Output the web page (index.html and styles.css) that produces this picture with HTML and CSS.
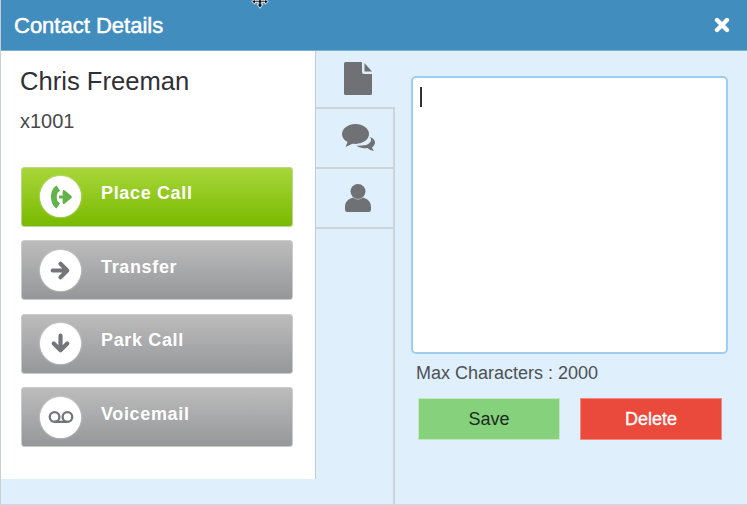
FILE: index.html
```html
<!DOCTYPE html>
<html lang="en">
<head>
<meta charset="utf-8">
<title>Contact Details</title>
<link rel="stylesheet" href="styles.css">
</head>
<body>
<div class="dialog">
  <header class="titlebar">
    <h1 class="title">Contact Details</h1>
    <svg class="close" viewBox="0 0 16 16" aria-label="Close"><path d="M3 3 13 13M13 3 3 13" stroke="#fff" stroke-width="4.4" stroke-linecap="round"/></svg>
    <svg class="cursor" viewBox="0 0 20 12"><path d="M10 -8 13 -4H11.5V1H16V-1L20 2 16 5V3H11.5V5H13.5L10 10 6.5 5H8.5V3H4V5L0 2 4 -1V1H8.5V-4H7Z" fill="#111" stroke="#fff" stroke-width="1"/></svg>
  </header>
  <div class="body">
    <aside class="panel">
      <div class="name">Chris Freeman</div>
      <div class="ext">x1001</div>
      <div class="actions">
        <button class="action action-green">
          <span class="badge">
            <svg viewBox="0 0 30 30" width="30" height="30"><path d="M10.500 3.500 14 8.500 11.500 11C10.500 13.500 10.500 16.500 11.500 19L14 21.500 10.500 26.500C7.500 25 5 20.500 5 15S7.500 5 10.500 3.500Z" fill="#62b34a"/><path d="M13 15h8M18 9.500 24.500 15 18 20.500Z" stroke="#62b34a" stroke-width="2.800" fill="#62b34a" stroke-linejoin="round"/></svg>
          </span>
          <span class="label">Place Call</span>
        </button>
        <button class="action">
          <span class="badge">
            <svg viewBox="0 0 24 24" width="25" height="25"><path d="M4.500 12H18M12 5.500 18.500 12 12 18.500" fill="none" stroke="#73757b" stroke-width="4" stroke-linecap="round" stroke-linejoin="round"/></svg>
          </span>
          <span class="label">Transfer</span>
        </button>
        <button class="action">
          <span class="badge">
            <svg viewBox="0 0 24 24" width="25" height="25"><path d="M12 4.500V18M5.500 12 12 18.500 18.500 12" fill="none" stroke="#73757b" stroke-width="4" stroke-linecap="round" stroke-linejoin="round"/></svg>
          </span>
          <span class="label">Park Call</span>
        </button>
        <button class="action">
          <span class="badge">
            <svg viewBox="0 0 28 28" width="30" height="30"><path d="M8 18.500h12" stroke="#73757b" stroke-width="2.200"/><circle cx="8" cy="14" r="4.500" fill="none" stroke="#73757b" stroke-width="2.200"/><circle cx="20" cy="14" r="4.500" fill="none" stroke="#73757b" stroke-width="2.200"/></svg>
          </span>
          <span class="label">Voicemail</span>
        </button>
      </div>
    </aside>
    <nav class="tabs">
      <div class="tab tab-active">
        <svg viewBox="0 0 28 33" width="28" height="33"><path d="M1.500 0H18V10a2 2 0 0 0 2 2H28V31.500A1.500 1.500 0 0 1 26.500 33H1.500A1.500 1.500 0 0 1 0 31.500V1.500A1.500 1.500 0 0 1 1.500 0Z" fill="#707174"/><path d="M20.500 1 28 9.500H20.500Z" fill="#707174"/></svg>
      </div>
      <div class="tab">
        <svg viewBox="0 0 33 27" width="33" height="27"><path d="M23 21.500c3-1 6-3 6-5.500 0-1-.3-2-1-3 3 1 5 3 5 5.500 0 2-1.300 3.800-3 4.800.3 1.200 1 2.400 2 3.700-2.500-.3-5-1.500-6.500-3-1 .2-2 .2-3 .2-3 0-6-1-8-2.500 3 .3 6 0 8.500-.7Z" fill="#707174"/><ellipse cx="13.500" cy="10" rx="13.500" ry="10" fill="#707174"/><path d="M6 17 3.500 23 12 19Z" fill="#707174"/></svg>
      </div>
      <div class="tab">
        <svg viewBox="0 0 26 28" width="26" height="28"><circle cx="13" cy="7.500" r="7.500" fill="#707174"/><path d="M8 13.500C3 15 0 18 0 23v2.500A2.500 2.500 0 0 0 2.500 28h21a2.500 2.500 0 0 0 2.500-2.500V23c0-5-3-8-8-9.500-3 2.500-7 2.500-10 0Z" fill="#707174"/></svg>
      </div>
      <div class="tab-rest"></div>
    </nav>
    <main class="notes">
      <div class="note-box"><span class="caret"></span></div>
      <div class="max">Max Characters : 2000</div>
      <div class="note-buttons">
        <button class="note-btn note-save">Save</button>
        <button class="note-btn note-delete">Delete</button>
      </div>
    </main>
  </div>
</div>
</body>
</html>
```
FILE: styles.css
```css
* { box-sizing: border-box; }
html, body { margin: 0; padding: 0; }
body { font-family: "Liberation Sans", Arial, sans-serif; overflow: hidden; background: #dfeffc; }
.dialog { width: 747px; height: 505px; display: flex; flex-direction: column; border-left: 1px solid #c9ced3; border-bottom: 1px solid #cfd8e0; background: #dfeffc; }
.titlebar { height: 51px; flex: none; background: #418dbd; border-bottom: 1px solid #78b0d6; display: flex; align-items: center; justify-content: space-between; padding: 0 17px 0 13px; position: relative; }
.title { margin: 1px 0 0; font-size: 22px; font-weight: 400; color: #fff; -webkit-text-stroke: 0.5px #fff; }
.close { width: 16px; height: 16px; }
.cursor { position: absolute; left: 249px; top: 0; width: 20px; height: 10px; }
.body { flex: 1; display: flex; min-height: 0; }
.panel { width: 315px; height: 428px; flex: none; background: #fff; border-right: 1px solid #c6cbd0; padding: 15px 22px 0 20px; }
.name { font-size: 25.600px; line-height: 30px; margin-left: -1px; color: #2f3033; }
.ext { font-size: 20px; line-height: 22px; margin: 14px 0 0 -1px; color: #48494c; }
.actions { display: flex; flex-direction: column; gap: 13.500px; margin-top: 34.500px; }
.action { width: 272px; height: 60px; border: 1px solid #c9cbcc; border-radius: 3px; padding: 0 0 0 18px; background: linear-gradient(#bcbcbc, #96979a); display: flex; align-items: center; font: inherit; }
.action-green { background: linear-gradient(#a8d63a, #79ba00); border-color: #bcd590; }
.badge { width: 41px; height: 41px; flex: none; border-radius: 50%; background: #fff; box-shadow: 0 0 2px #eee; display: flex; align-items: center; justify-content: center; }
.label { margin: 0 0 6px 20px; color: #fff; font-size: 18px; font-weight: 700; letter-spacing: 0.650px; }
.tabs { width: 79px; flex: none; display: flex; flex-direction: column; }
.tab { height: 60px; flex: none; display: flex; align-items: center; justify-content: center; border-right: 2px solid #cdd3d8; border-bottom: 2px solid #cdd3d8; padding: 0 0 1px 7px; }
.tab-active { height: 58px; border-right: 0; padding: 0 0 2px 5px; }
.tab-rest { flex: 1; border-right: 2px solid #cdd3d8; }
.notes { flex: 1; padding: 25px 19px 0 16px; }
.note-box { width: 317px; height: 278px; background: #fff; border: 2px solid #9ecdf3; border-radius: 5px; padding: 9px 7px; }
.caret { display: block; width: 2px; height: 20px; background: #333; }
.max { font-size: 18px; line-height: 20px; margin: 9px 0 0 5px; color: #4e5054; }
.note-buttons { display: flex; gap: 20px; margin: 15px 0 0 7px; }
.note-btn { width: 142px; height: 42px; border: 1px solid #c4e6c0; font: 18px "Liberation Sans", Arial, sans-serif; padding: 0; }
.note-save { background: #86d27c; color: #1d2a1d; }
.note-delete { background: #ea4a3c; color: #fff; border-color: #f08a80; -webkit-text-stroke: 0.3px #fff; }
```
